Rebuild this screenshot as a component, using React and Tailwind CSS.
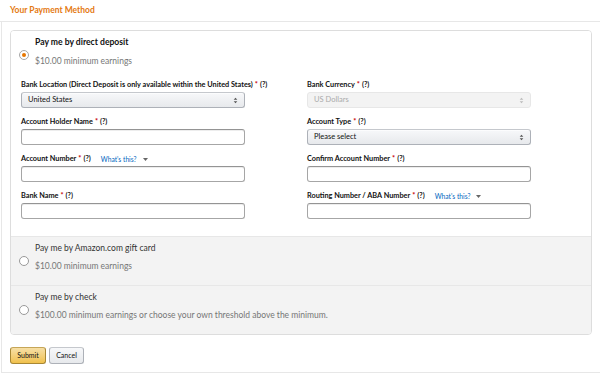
import React from "react";

const Arrows = ({ color = "#555" }) => (
  <svg width="5" height="7" viewBox="0 0 5 7" className="shrink-0">
    <path d="M2.5 0.8 L4.3 2.8 L0.7 2.8 Z" fill={color} />
    <path d="M2.5 6.2 L4.3 4.2 L0.7 4.2 Z" fill={color} />
  </svg>
);

const Caret = () => (
  <svg width="5" height="3" viewBox="0 0 5 3" className="ml-[6px]">
    <path d="M0 0 L5 0 L2.5 3 Z" fill="#666" />
  </svg>
);

const Label = ({ text, link }) => (
  <div className="flex items-center h-[10px] mb-[2px] text-[7.3px] leading-[10px] font-bold text-[#111] whitespace-nowrap">
    <span>{text}</span>
    <span className="text-[#c40000] ml-[2px]">*</span>
    <span className="ml-[2px]">(?)</span>
    {link && (
      <span className="flex items-center ml-[10px] font-normal text-[6.7px] text-[#0066c0]">
        What's this?
        <Caret />
      </span>
    )}
  </div>
);

const Input = () => (
  <div className="h-[16px] bg-white border border-[#a6a6a6] border-t-[#949494] rounded-[3px] shadow-[inset_0_1px_0_rgba(0,0,0,0.07)]" />
);

const Select = ({ value, disabled }) =>
  disabled ? (
    <div className="h-[16px] flex items-center justify-between px-[6px] bg-[#f3f3f3] border border-[#e7e7e7] rounded-[3px] text-[7.5px] text-[#aaa]">
      <span>{value}</span>
      <Arrows color="#bbb" />
    </div>
  ) : (
    <div className="h-[16px] flex items-center justify-between pl-[6px] pr-[6px] bg-gradient-to-b from-[#f7f8fa] to-[#e7e9ec] border border-[#adb1b8] border-t-[#c5c8cd] rounded-[3px] shadow-[0_1px_0_rgba(255,255,255,0.6)_inset] text-[7.5px] text-[#111]">
      <span>{value}</span>
      <Arrows />
    </div>
  );

const Radio = ({ checked }) => (
  <div
    className={
      "mt-[14px] w-[10px] h-[10px] rounded-full border shrink-0 flex items-center justify-center bg-white " +
      (checked ? "border-[#a6a6a6]" : "border-[#999]")
    }
  >
    {checked && <div className="w-[4px] h-[4px] rounded-full bg-[#e77600]" />}
  </div>
);

const Field = ({ label, link, children }) => (
  <div className="flex flex-col">
    <Label text={label} link={link} />
    {children}
  </div>
);

export default function App() {
  return (
    <div
      className="w-[600px] h-[374px] bg-white overflow-hidden"
      style={{ fontFamily: "Lato, 'Liberation Sans', Arial, sans-serif" }}
    >
      <div className="h-[22px] border-b border-[#e7e7e7] flex items-center pl-[10px] pb-[1px]">
        <span className="text-[8.5px] font-bold text-[#e47911] leading-[12px]">Your Payment Method</span>
      </div>
      <div className="ml-[1px] h-[351px] border-l border-b border-[#e7e7e7] pl-[8px] pt-[8px]">
        <div className="w-[582px] border border-[#ddd] rounded-[4px] overflow-hidden">
          {/* Section 1 */}
          <div className="bg-white pt-[5px] pb-[17px]">
            <div className="flex pl-[8px] gap-[6px]">
              <Radio checked />
              <div className="flex flex-col">
                <div className="text-[8.6px] leading-[12px] font-bold text-[#111]">Pay me by direct deposit</div>
                <div className="mt-[7px] text-[8.5px] leading-[12px] text-[#767676]">$10.00 minimum earnings</div>
              </div>
            </div>
            <div className="mt-[13px] pl-[10px] grid grid-cols-[224px_224px] gap-x-[62px] gap-y-[9px]">
              <Field label="Bank Location (Direct Deposit is only available within the United States)">
                <Select value="United States" />
              </Field>
              <Field label="Bank Currency">
                <Select value="US Dollars" disabled />
              </Field>
              <Field label="Account Holder Name">
                <Input />
              </Field>
              <Field label="Account Type">
                <Select value="Please select" />
              </Field>
              <Field label="Account Number" link>
                <Input />
              </Field>
              <Field label="Confirm Account Number">
                <Input />
              </Field>
              <Field label="Bank Name">
                <Input />
              </Field>
              <Field label="Routing Number / ABA Number" link>
                <Input />
              </Field>
            </div>
          </div>
          {/* Section 2 */}
          <div className="bg-[#f3f3f3] border-t border-[#e7e7e7] pt-[5px] pb-[13px] flex pl-[8px] gap-[6px]">
            <Radio />
            <div className="flex flex-col">
              <div className="text-[8.5px] leading-[12px] text-[#333]">Pay me by Amazon.com gift card</div>
              <div className="mt-[6px] text-[8.5px] leading-[12px] text-[#767676]">$10.00 minimum earnings</div>
            </div>
          </div>
          {/* Section 3 */}
          <div className="bg-[#f3f3f3] border-t border-[#e7e7e7] pt-[5px] pb-[13px] flex pl-[8px] gap-[6px]">
            <Radio />
            <div className="flex flex-col">
              <div className="text-[8.5px] leading-[12px] text-[#333]">Pay me by check</div>
              <div className="mt-[6px] text-[8.5px] leading-[12px] text-[#767676]">
                $100.00 minimum earnings or choose your own threshold above the minimum.
              </div>
            </div>
          </div>
        </div>
        <div className="mt-[12px] flex gap-[3px]">
          <button className="w-[36px] h-[17px] rounded-[3px] border border-[#a88734] border-t-[#c6a658] bg-gradient-to-b from-[#f7dfa5] to-[#f0c14b] text-[7px] text-[#111] flex items-center justify-center">
            Submit
          </button>
          <button className="w-[35px] h-[17px] rounded-[3px] border border-[#adb1b8] border-t-[#c5c8cd] bg-gradient-to-b from-[#f7f8fa] to-[#e7e9ec] text-[7px] text-[#111] flex items-center justify-center">
            Cancel
          </button>
        </div>
      </div>
    </div>
  );
}
